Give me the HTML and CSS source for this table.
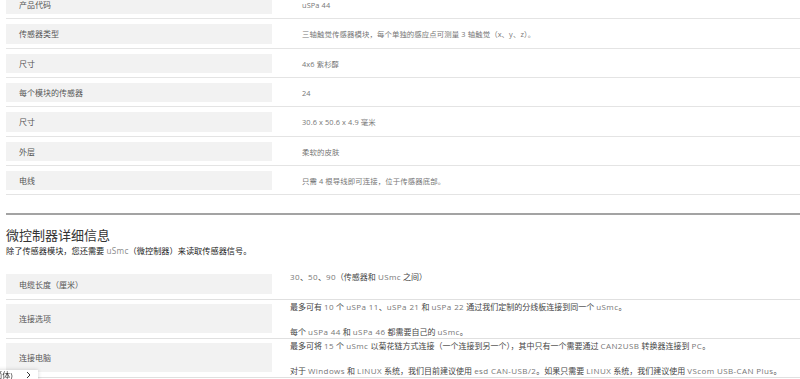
FILE: index.html
```html
<!DOCTYPE html>
<html lang="zh-CN">
<head>
<meta charset="utf-8">
<title>uSPa 44</title>
<link rel="stylesheet" href="styles.css">
</head>
<body>
<main class="page">
  <section class="specs">
    <div class="row"><div class="label">产品代码</div><div class="value">uSPa 44</div></div>
    <div class="row"><div class="label">传感器类型</div><div class="value">三轴触觉传感器模块，每个单独的感应点可测量 3 轴触觉（x、y、z）。</div></div>
    <div class="row"><div class="label">尺寸</div><div class="value">4x6 紫杉醇</div></div>
    <div class="row"><div class="label">每个模块的传感器</div><div class="value">24</div></div>
    <div class="row"><div class="label">尺寸</div><div class="value">30.6 x 50.6 x 4.9 毫米</div></div>
    <div class="row"><div class="label">外层</div><div class="value">柔软的皮肤</div></div>
    <div class="row"><div class="label">电线</div><div class="value">只需 4 根导线即可连接，位于传感器底部。</div></div>
  </section>

  <hr class="divider">

  <section class="mc">
    <h2 class="title">微控制器详细信息</h2>
    <p class="intro">除了传感器模块，您还需要 <span class="en">uSmc</span>（微控制器）来读取传感器信号。</p>

    <div class="table2">
      <div class="row2">
        <div class="cell-l"><div class="label2">电缆长度（厘米）</div></div>
        <div class="cell-r"><p><span class="en">30</span>、<span class="en">50</span>、<span class="en">90</span>（传感器和 <span class="en">USmc</span> 之间）</p></div>
      </div>
      <div class="row2">
        <div class="cell-l"><div class="label2">连接选项</div></div>
        <div class="cell-r">
          <p>最多可有 <span class="en">10</span> 个 <span class="en">uSPa 11</span>、<span class="en">uSPa 21</span> 和 <span class="en">uSPa 22</span> 通过我们定制的分线板连接到同一个 <span class="en">uSmc</span>。</p>
          <p>每个 <span class="en">uSPa 44</span> 和 <span class="en">uSPa 46</span> 都需要自己的 <span class="en">uSmc</span>。</p>
        </div>
      </div>
      <div class="row2">
        <div class="cell-l"><div class="label2">连接电脑</div></div>
        <div class="cell-r">
          <p>最多可将 <span class="en">15</span> 个 <span class="en">uSmc</span> 以菊花链方式连接（一个连接到另一个），其中只有一个需要通过 <span class="en">CAN2USB</span> 转换器连接到 <span class="en">PC</span>。</p>
          <p>对于 <span class="en">Windows</span> 和 <span class="en">LINUX</span> 系统，我们目前建议使用 <span class="en">esd CAN-USB/2</span>。如果只需要 <span class="en">LINUX</span> 系统，我们建议使用 <span class="en">VScom USB-CAN Plus</span>。</p>
        </div>
      </div>
    </div>
  </section>
</main>

<div class="lang">
  <span class="lang-text">中文(简体)</span>
  <svg class="chev" width="5" height="8" viewBox="0 0 5 8"><path d="M1 1 L4 4 L1 7" fill="none" stroke="#333" stroke-width="1"/></svg>
</div>
</body>
</html>
```

FILE: styles.css
```css
html, body {
  margin: 0;
  padding: 0;
  background: #ffffff;
}

body {
  font-family: "Open Sans", "Noto Sans CJK SC", sans-serif;
  overflow: hidden;
  height: 379px;
}

.page {
  padding-left: 6px;
}

.specs {
  margin-top: -10px;
}

.row {
  display: grid;
  grid-template-columns: 266px 1fr;
  padding: 5px 0 4px;
  border-bottom: 1px solid #e4e4e4;
}

.label {
  background: #f2f2f2;
  height: 19.33px;
  display: flex;
  align-items: center;
  padding-left: 13px;
  font-size: 8px;
  color: #555;
}

.value {
  padding-left: 30px;
  display: flex;
  align-items: center;
  font-size: 7.4px;
  color: #777;
  letter-spacing: 0.1px;
}

.divider {
  margin: 18px 0 0;
  border: 0;
  height: 2px;
  background: #a3a3a3;
}

.title {
  margin: 12px 0 0;
  font-size: 13px;
  line-height: 16px;
  font-weight: 400;
  color: #333;
}

.intro {
  margin: 2px 0 0;
  font-size: 8.2px;
  line-height: 11px;
  color: #222;
  font-weight: 400;
}

.en {
  color: #8a8a8a;
  font-weight: 400;
  letter-spacing: 0.3px;
}

.table2 {
  margin-top: 14px;
}

.row2 {
  display: grid;
  grid-template-columns: 266px 1fr;
  border-bottom: 1px solid #e0e0e0;
}

.cell-l {
  padding: 4px 0 5px;
  display: flex;
}

.label2 {
  flex: 1;
  background: #f2f2f2;
  min-height: 20px;
  display: flex;
  align-items: center;
  padding-left: 13px;
  font-size: 8px;
  color: #555;
}

.cell-r {
  padding-left: 18px;
  font-size: 8px;
  line-height: 13px;
  color: #444;
  display: flex;
  flex-direction: column;
  gap: 12px;
}

.cell-r p {
  margin: 0;
  white-space: nowrap;
}

.cell-r .en {
  color: #777;
  letter-spacing: 0.4px;
}

.lang {
  position: fixed;
  top: 370px;
  left: -28px;
  height: 20px;
  display: flex;
  align-items: flex-start;
  gap: 13px;
  padding: 0 7px 0 4px;
  background: #fff;
  box-shadow: 0 0 4px rgba(0, 0, 0, 0.18);
  font-size: 8px;
  line-height: 10px;
  color: #333;
}

.chev {
  margin-top: 1px;
}
```
